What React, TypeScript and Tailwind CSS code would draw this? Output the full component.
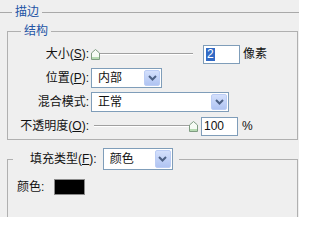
import React from "react";

const Chevron = () => (
  <svg width="9" height="6" viewBox="0 0 9 6">
    <path d="M1 1 L4.5 4.5 L8 1" fill="none" stroke="#4d6185" strokeWidth="2" />
  </svg>
);

const Select = ({ value, width }: { value: string; width: string }) => (
  <div className={`flex h-[20px] items-center border border-[#7f9db9] bg-white ${width}`}>
    <span className="flex-1 pl-[6px] leading-none">{value}</span>
    <span className="mr-[1px] flex h-[16px] w-[16px] items-center justify-center rounded-[2px] border border-[#bccdf5] bg-gradient-to-b from-[#d4e0fc] to-[#b0c4f2]">
      <Chevron />
    </span>
  </div>
);

const Thumb = () => (
  <svg width="9" height="11" viewBox="0 0 9 11" className="shrink-0">
    <path d="M0.5 4 L4.5 0.5 L8.5 4 V10.5 H0.5 Z" fill="#f6fbf5" stroke="#7f9c82" />
    <rect x="1" y="8" width="7" height="2" fill="#b6dbb2" />
  </svg>
);

const Track = () => <div className="h-[2px] flex-1 border-t border-[#a0a0a0] border-b border-b-white" />;

const Label = ({ children }: { children: React.ReactNode }) => (
  <div className="w-[81px] shrink-0 text-right whitespace-nowrap">{children}</div>
);

const Mn = ({ c }: { c: string }) => <span className="underline underline-offset-1">{c}</span>;

export default function App() {
  return (
    <div className="h-[217px] w-[299px] overflow-hidden bg-[#efefef] pt-[4px] text-[12px] leading-[16px] text-[#111] font-['Liberation_Sans','Noto_Sans_CJK_SC',sans-serif]">
      <fieldset className="-ml-[4px] w-[307px] border border-[#a9a9a9] pl-[10px] pr-[4px] pt-[3px] pb-[10px]">
        <legend className="ml-[5px] px-[3px] text-[#2354a5]">描边</legend>

        {/* 结构 */}
        <fieldset className="border border-[#b0b0b0] pt-[5px] pb-[3px]">
          <legend className="ml-[13px] px-[3px] text-[#2354a5]">结构</legend>
          <div className="flex flex-col gap-[4px]">
            <div className="flex h-[20px] items-center">
              <Label>大小(<Mn c="S" />):</Label>
              <div className="ml-[2px] flex w-[102px] items-center">
                <Thumb />
                <Track />
              </div>
              <div className="ml-[10px] flex h-[19px] w-[37px] items-center border border-[#7f9db9] bg-white pl-[2px]">
                <span className="bg-[#316ac5] px-[1px] leading-[13px] text-white">2</span>
              </div>
              <span className="ml-[3px]">像素</span>
            </div>
            <div className="flex h-[20px] items-center">
              <Label>位置(<Mn c="P" />):</Label>
              <div className="ml-[2px]">
                <Select value="内部" width="w-[71px]" />
              </div>
            </div>
            <div className="flex h-[20px] items-center">
              <Label>混合模式:</Label>
              <div className="ml-[2px]">
                <Select value="正常" width="w-[138px]" />
              </div>
            </div>
            <div className="flex h-[20px] items-center">
              <Label>不透明度(<Mn c="O" />):</Label>
              <div className="ml-[5px] flex w-[104px] items-center">
                <Track />
                <Thumb />
              </div>
              <div className="ml-[3px] flex h-[19px] w-[37px] items-center border border-[#7f9db9] bg-white pl-[2px]">
                100
              </div>
              <span className="ml-[4px]">%</span>
            </div>
          </div>
        </fieldset>

        {/* 填充 */}
        <fieldset className="mt-[8px] h-[90px] border border-[#b0b0b0] pt-[9px]">
          <legend className="ml-[5px] flex items-center pl-[17px] pr-[6px]">
            <span>填充类型(<Mn c="F" />):</span>
            <div className="ml-[6px]">
              <div className="flex h-[22px] w-[70px] items-center border border-[#7f9db9] bg-white">
                <span className="flex-1 pl-[6px] leading-none">颜色</span>
                <span className="mr-[1px] flex h-[18px] w-[16px] items-center justify-center rounded-[2px] border border-[#bccdf5] bg-gradient-to-b from-[#d4e0fc] to-[#b0c4f2]">
                  <Chevron />
                </span>
              </div>
            </div>
          </legend>
          <div className="flex items-center pl-[9px]">
            <span>颜色:</span>
            <div className="ml-[10px] h-[16px] w-[31px] border border-[#8a8a8a] bg-black" />
          </div>
        </fieldset>
      </fieldset>
    </div>
  );
}
